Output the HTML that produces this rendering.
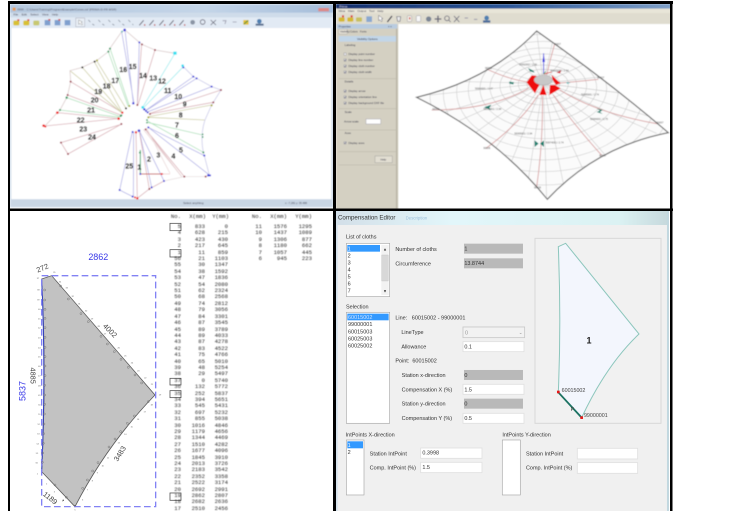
<!DOCTYPE html>
<html><head><meta charset="utf-8"><style>
html,body{margin:0;padding:0;background:#fff;width:741px;height:511px;overflow:hidden}
#s{position:absolute;left:0;top:0;width:741px;height:511px}
text{font-family:"Liberation Sans",sans-serif}
.col{position:absolute;font:5.6px/6.41px "Liberation Mono",monospace;color:#2a2a2a;text-align:right;white-space:pre;filter:blur(.4px)}
</style></head><body>
<svg id="s" width="741" height="511" viewBox="0 0 741 511" xmlns="http://www.w3.org/2000/svg">
<defs>
<filter id="b1" filterUnits="userSpaceOnUse" x="-10" y="-10" width="1200" height="1000"><feGaussianBlur stdDeviation="1.7"/></filter>
<filter id="b2" filterUnits="userSpaceOnUse" x="-10" y="-10" width="1200" height="1000"><feGaussianBlur stdDeviation="1.1"/></filter>
<linearGradient id="t1" x1="0" x2="1" y1="0" y2="0"><stop offset="0" stop-color="#b5c8de"/><stop offset=".6" stop-color="#c4d5e8"/><stop offset="1" stop-color="#a5bdda"/></linearGradient>
<linearGradient id="t2" x1="0" x2="1" y1="0" y2="0"><stop offset="0" stop-color="#16306e"/><stop offset=".5" stop-color="#2a5596"/><stop offset="1" stop-color="#7fa0c8"/></linearGradient>
<linearGradient id="t4" x1="0" x2="1" y1="0" y2="0"><stop offset="0" stop-color="#d3dfe8"/><stop offset=".35" stop-color="#e2f6fa"/><stop offset=".85" stop-color="#dbf2f3"/><stop offset="1" stop-color="#c6d8dc"/></linearGradient>
<clipPath id="mem"><path d="M620 93Q830 240 1015 398Q800 440 652 598Q500 410 260 292Q480 240 620 93Z"/></clipPath>
</defs>
<rect width="741" height="511" fill="#fff"/>

<!-- PANEL 1 -->
<g transform="scale(.3333)" filter="url(#b1)">
<rect x="30" y="12" width="970" height="610" fill="#cfdcea"/>
<rect x="30" y="14" width="970" height="24" fill="url(#t1)"/>
<rect x="38" y="23" width="9" height="9" fill="#e89a50"/>
<text x="52" y="32" font-size="9" fill="#556">RRR - C:\Users\Training\Program\Example\Cones.csf (PRIMA-D-FR-MSR)</text>
<rect x="955" y="24" width="32" height="10" fill="#d88"/>
<text x="40" y="47" font-size="9" fill="#445" word-spacing="8">File Edit Select View Help</text>
<rect x="30" y="52" width="970" height="32" fill="#e2eaf4"/>
<g fill="#d8c030"><rect x="40" y="62" width="18" height="14" rx="3"/><rect x="70" y="62" width="18" height="14" rx="3"/><rect x="100" y="62" width="18" height="14" rx="3" fill="#c8c870"/></g>
<g fill="#d84040"><rect x="52" y="58" width="6" height="5"/><rect x="82" y="58" width="6" height="5"/></g>
<g fill="#7f9fce"><rect x="134" y="60" width="17" height="16"/><rect x="164" y="60" width="17" height="16"/><rect x="194" y="60" width="17" height="16"/></g>
<g fill="#d05050"><rect x="145" y="57" width="6" height="5"/><rect x="175" y="57" width="6" height="5"/></g>
<rect x="227" y="54" width="27" height="26" fill="#e8eef5" stroke="#889"/>
<path d="M236 60l0 13 4-3 5 5 3-2-5-5 4-2z" fill="#fff" stroke="#555"/>
<g stroke="#8a93a0" stroke-width="2.5" fill="none"><path d="M265 60l6 6M277 72l6 4M295 60l6 6M307 72l6 4M325 60l6 6M337 72l6 4M355 60l6 6M367 72l6 4M385 60l6 6M397 72l3 3"/></g>
<g stroke="#667" stroke-width="3" fill="none"><path d="M418 76l13-15M448 76l13-15M478 76l13-15M508 76l13-15M538 76l13-15"/></g>
<g fill="#c04040"><rect x="432" y="73" width="4" height="4"/><rect x="462" y="73" width="4" height="4"/><rect x="492" y="73" width="4" height="4"/><rect x="522" y="73" width="4" height="4"/><rect x="552" y="73" width="4" height="4"/></g>
<circle cx="578" cy="67" r="7" fill="#8a94a4"/><circle cx="608" cy="66" r="7" fill="none" stroke="#667" stroke-width="2.5"/><path d="M632 60l16 15M648 60l-16 15" stroke="#667" stroke-width="2.5"/>
<path d="M668 62h10l-3 10M698 66h12" stroke="#99a" stroke-width="2.5" fill="none"/>
<rect x="730" y="60" width="16" height="14" fill="#e4c030"/><path d="M732 72l12-10" stroke="#3a8a50" stroke-width="3"/>
<circle cx="778" cy="64" r="7" fill="#4f7fb0"/><rect x="767" y="71" width="24" height="6" fill="#5a6f90"/>
<rect x="34" y="84" width="960" height="514" fill="#fff"/>
<rect x="34" y="598" width="960" height="22" fill="#c9d6e4"/>
<text x="580" y="612" font-size="9" fill="#445" text-anchor="middle">Select anything</text>
<text x="888" y="612" font-size="8" fill="#445" text-anchor="middle">x: -7,281 y: 35.488</text>
<g fill="none" stroke-width="2.4">
<g stroke="#b4b4e8"><path d="M397 396L359 570L398 590M401 396L400 590M418 392L455 562M418 392L492 543M445 382L628 525M445 382L613 467M400 310L375 90M402 310L365 95M412 315L418 127M438 332L590 235M436 332L580 230M442 336L635 260"/></g>
<g stroke="#dcb4ba"><path d="M408 397L412 595M418 395L448 567L412 595M448 567L492 543M412 315L425 133M414 315L465 150M448 342L640 307M450 340L663 270M367 372L183 428M365 372L204 462M183 428L204 462M367 338L212 245M362 345L203 285M356 356L172 338M356 356L135 378L130 376M437 388L553 530M436 388L545 530"/></g>
<g stroke="#b0e2bc"><path d="M440 362L610 457M441 367L608 405M388 318L330 145M385 320L325 155M361 350L200 293M358 352L180 330"/></g>
<g stroke="#a0eef0"><path d="M428 322L525 160M430 324L550 200"/></g>
<g stroke="#d0d0a8"><path d="M445 352L615 360M446 350L635 315M378 325L290 182M367 338L283 185M367 340L247 202M367 340L210 212"/></g>
<g stroke="#ecdcdc"><path d="M430 388L545 530M440 385L510 520"/></g>
<path d="M628 525L617 530L553 530L492 543" stroke="#e8e0e0"/>
<path d="M628 525L613 467L610 457Q600 405 615 360L635 315L640 307L663 270L635 260L590 235L580 230L550 200" stroke="#ccccea"/>
<path d="M525 160L465 150L425 133L418 127L375 90L365 95L330 145L325 155L290 182L283 185L247 202L210 212L212 245L203 285L200 293L180 330L172 338L135 378" stroke="#dccccc"/>
<path d="M421 450L421 522" stroke="#50a878" stroke-width="3"/>
<path d="M421 522L490 522" stroke="#cc6060" stroke-width="3"/>
<path d="M490 522L510 522" stroke="#eecccc"/>
</g>
<g>
<g fill="#3636d8"><circle cx="374" cy="90" r="4"/><circle cx="366" cy="95" r="3" fill="#70c0c0"/><circle cx="418" cy="127" r="3"/><circle cx="580" cy="230" r="3"/><circle cx="590" cy="235" r="3"/><circle cx="635" cy="260" r="3"/><circle cx="400" cy="310" r="3.5"/><circle cx="433" cy="328" r="3.5"/><circle cx="438" cy="333" r="3"/><circle cx="443" cy="337" r="3"/><circle cx="398" cy="396" r="3"/><circle cx="417" cy="392" r="4"/><circle cx="445" cy="382" r="3"/><circle cx="421" cy="522" r="3"/><circle cx="455" cy="562" r="3"/><circle cx="492" cy="543" r="3"/><circle cx="359" cy="570" r="3"/><circle cx="398" cy="590" r="3"/><circle cx="625" cy="526" r="3.5"/><circle cx="630" cy="526" r="3"/><circle cx="613" cy="467" r="3"/><circle cx="550" cy="202" r="3"/></g>
<g fill="#ee2020"><circle cx="172" cy="338" r="4"/><circle cx="131" cy="377" r="4"/><circle cx="136" cy="380" r="3"/><circle cx="356" cy="356" r="4"/><circle cx="367" cy="338" r="3.5"/><circle cx="408" cy="397" r="3.5"/><circle cx="412" cy="595" r="3.5"/><circle cx="405" cy="592" r="3"/><circle cx="485" cy="522" r="3"/></g>
<g fill="#a04050"><circle cx="426" cy="133" r="3"/><circle cx="465" cy="150" r="3"/><circle cx="663" cy="270" r="3"/><circle cx="640" cy="307" r="3"/><circle cx="450" cy="342" r="3"/><circle cx="412" cy="315" r="3"/><circle cx="364" cy="372" r="3"/><circle cx="183" cy="428" r="3"/><circle cx="204" cy="462" r="3"/><circle cx="212" cy="245" r="3"/><circle cx="203" cy="285" r="3"/><circle cx="437" cy="388" r="3"/><circle cx="448" cy="567" r="3"/><circle cx="553" cy="530" r="3"/><circle cx="617" cy="530" r="3"/></g>
<g fill="#2a9a60"><circle cx="330" cy="146" r="3"/><circle cx="325" cy="155" r="3"/><circle cx="200" cy="293" r="3.5"/><circle cx="180" cy="330" r="3"/><circle cx="362" cy="348" r="3"/><circle cx="364" cy="346" r="3"/><circle cx="610" cy="457" r="3"/><circle cx="608" cy="403" r="2.5"/><circle cx="608" cy="411" r="2.5"/><circle cx="441" cy="360" r="2.5"/><circle cx="441" cy="368" r="2.5"/><circle cx="420" cy="458" r="3"/></g>
<g fill="#111"><circle cx="247" cy="202" r="3"/><circle cx="378" cy="325" r="3"/><circle cx="284" cy="185" r="3"/></g>
<g fill="#a8a820"><circle cx="291" cy="181" r="3"/><circle cx="635" cy="316" r="3"/><circle cx="445" cy="352" r="3"/><circle cx="388" cy="318" r="3"/></g>
<g fill="#30e0f0"><rect x="520" y="155" width="10" height="9"/><circle cx="548" cy="197" r="4"/><circle cx="428" cy="322" r="4"/></g>
</g>
<g font-size="21" font-weight="bold" fill="#1a1a1a" text-anchor="middle" stroke="#1a1a1a" stroke-width=".5">
<text x="388" y="505">25</text><text x="418" y="508">1</text><text x="447" y="485">2</text><text x="475" y="473">3</text><text x="520" y="475">4</text><text x="543" y="458">5</text><text x="531" y="414">6</text><text x="531" y="382">7</text><text x="542" y="352">8</text><text x="554" y="319">9</text><text x="535" y="297">10</text><text x="503" y="279">11</text><text x="486" y="251">12</text><text x="460" y="241">13</text><text x="429" y="234">14</text><text x="398" y="207">15</text><text x="370" y="216">16</text><text x="346" y="249">17</text><text x="320" y="265">18</text><text x="295" y="282">19</text><text x="284" y="308">20</text><text x="273" y="337">21</text><text x="242" y="367">22</text><text x="250" y="394">23</text><text x="276" y="418">24</text>
</g>
</g>

<!-- PANEL 2 -->
<g transform="translate(330,0) scale(.3333)" filter="url(#b1)">
<rect x="18" y="12" width="1005" height="615" fill="#d6d2c4"/>
<rect x="18" y="12" width="1005" height="14" fill="url(#t2)"/>
<text x="28" y="22" font-size="9" fill="#dde">Prima</text>
<rect x="18" y="26" width="1005" height="14" fill="#e8e5d8"/>
<text x="26" y="36" font-size="9" fill="#445" word-spacing="6">Mina Main Output Tool Help</text>
<rect x="18" y="40" width="1005" height="32" fill="#dfdccf"/>
<g fill="#d4b830"><rect x="26" y="52" width="18" height="13" rx="3"/><rect x="52" y="52" width="18" height="13" rx="3"/><rect x="78" y="52" width="18" height="13" rx="3" fill="#c8c060"/></g>
<g fill="#d83030"><rect x="36" y="46" width="6" height="6"/><rect x="62" y="46" width="6" height="6"/></g>
<rect x="109" y="49" width="17" height="17" fill="#8aa8d0"/>
<path d="M146 46v16l4-3 4 6 3-2-3-6 5-1z" fill="#fff" stroke="#556" stroke-width="1.5"/>
<path d="M172 66l14-18" stroke="#334" stroke-width="3.5"/>
<path d="M200 50h12l-2 14h-7z" fill="#eee" stroke="#667" stroke-width="2"/>
<rect x="232" y="47" width="13" height="18" rx="3" fill="#f4f0e8" stroke="#778"/><rect x="237" y="52" width="4" height="6" fill="#d04040"/>
<rect x="259" y="47" width="13" height="18" rx="3" fill="#f8f8f8" stroke="#778"/>
<circle cx="296" cy="57" r="8" fill="#7a8494"/><path d="M324 47v20M314 57h20" stroke="#667" stroke-width="4"/>
<circle cx="351" cy="55" r="7" fill="none" stroke="#667" stroke-width="2.5"/><path d="M356 60l6 6" stroke="#667" stroke-width="2.5"/>
<path d="M372 48l16 18M388 48l-16 18" stroke="#667" stroke-width="2.5"/>
<path d="M404 54h10M432 58h10" stroke="#99a" stroke-width="3"/>
<circle cx="470" cy="54" r="7" fill="#4f7fb0"/><rect x="459" y="61" width="22" height="7" fill="#4a6a9a"/>

<rect x="20" y="72" width="182" height="555" fill="#d4d0c2"/>
<rect x="20" y="72" width="182" height="14" fill="#b9cce0"/>
<rect x="198" y="86" width="4" height="541" fill="#b8b4a6"/>
<text x="26" y="82" font-size="8" fill="#334">Properties</text>
<text x="174" y="82" font-size="8" fill="#334">&#215; &#215;</text>
<rect x="26" y="88" width="26" height="14" fill="#e8e4d8" stroke="#999"/>
<text x="30" y="98" font-size="8" fill="#334">Visibility</text><text x="60" y="98" font-size="8" fill="#334">Colors</text><text x="90" y="98" font-size="8" fill="#334">Fonts</text>
<rect x="26" y="108" width="172" height="17" fill="#c2d6e8"/>
<text x="112" y="120" font-size="8.5" fill="#334" text-anchor="middle">Visibility Options</text>
<g font-size="8.5" fill="#334">
<text x="44" y="138">Labeling</text>
<text x="55" y="165">Display point number</text><text x="55" y="183">Display line number</text><text x="55" y="201">Display cloth number</text><text x="55" y="219">Display cloth width</text>
<text x="44" y="248">Details</text>
<text x="55" y="276">Display arrow</text><text x="55" y="294">Display orientation line</text><text x="55" y="312">Display background DXF file</text>
<text x="44" y="339">Scale</text><text x="42" y="368">Arrow scale</text>
<text x="44" y="402">Axes</text><text x="55" y="432">Display axes</text>
</g>
<g fill="#eee" stroke="#778"><rect x="42" y="159" width="7" height="7"/><rect x="42" y="177" width="7" height="7"/><rect x="42" y="195" width="7" height="7"/><rect x="42" y="213" width="7" height="7"/><rect x="42" y="270" width="7" height="7"/><rect x="42" y="288" width="7" height="7"/><rect x="42" y="306" width="7" height="7"/><rect x="42" y="425" width="7" height="7"/></g>
<g stroke="#556" stroke-width="1.6" fill="none"><path d="M43 180l2 3 3-5M43 198l2 3 3-5M43 216l2 3 3-5M43 273l2 3 3-5M43 291l2 3 3-5M43 309l2 3 3-5M43 428l2 3 3-5"/></g>
<path d="M26 236H198M26 326H198M26 390H198M26 455H198M26 495H198" stroke="#b8b4a6" stroke-width="1.5"/>
<rect x="108" y="357" width="44" height="15" fill="#fff" stroke="#889"/>
<rect x="135" y="468" width="52" height="20" fill="#e2ded2" stroke="#888"/>
<text x="160" y="482" font-size="8.5" fill="#334" text-anchor="middle">Help</text>

<rect x="205" y="72" width="818" height="555" fill="#fff"/>
<path d="M620 93Q830 240 1015 398Q800 440 652 598Q500 410 260 292Q480 240 620 93Z" fill="#fbfbfb"/>
<g clip-path="url(#mem)" fill="none" stroke="#c6c6c6" stroke-width="1.6">
<ellipse cx="640" cy="250" rx="50" ry="28"/><ellipse cx="640" cy="252" rx="75" ry="44"/><ellipse cx="640" cy="255" rx="100" ry="60"/><ellipse cx="640" cy="258" rx="130" ry="80"/><ellipse cx="640" cy="262" rx="160" ry="100"/><ellipse cx="640" cy="266" rx="190" ry="122"/><ellipse cx="640" cy="270" rx="225" ry="146"/><ellipse cx="640" cy="275" rx="260" ry="172"/><ellipse cx="640" cy="280" rx="300" ry="200"/><ellipse cx="640" cy="285" rx="340" ry="230"/><ellipse cx="640" cy="290" rx="385" ry="265"/>
<path d="M640 250L620 93M640 250L580 125M640 250L540 170M640 250L470 200M640 250L400 245M640 250L300 285M640 250L330 340M640 250L370 370M640 250L420 410M640 250L470 480M640 250L530 520M640 250L590 570M640 250L650 600M640 250L700 550M640 250L760 510M640 250L830 470M640 250L900 440M640 250L980 400M640 250L960 350M640 250L880 280M640 250L820 230M640 250L770 190M640 250L720 150M640 250L670 115"/>
</g>
<g fill="none" stroke="#d8a0a0" stroke-width="2.6">
<path d="M674 132Q660 180 650 225"/><path d="M470 207Q540 240 600 247"/><path d="M805 238Q740 245 680 250"/><path d="M305 330Q480 330 595 265"/><path d="M985 372Q800 340 690 270"/><path d="M468 445Q570 370 625 285"/><path d="M815 466Q720 360 670 285"/><path d="M620 562Q640 420 637 288"/>
</g>
<path d="M620 93Q830 240 1015 398Q800 440 652 598Q500 410 260 292Q480 240 620 93Z" fill="none" stroke="#666" stroke-width="3.4"/>
<g fill="#ee1010">
<path d="M605 226l15 2 8 27-13 25-25-33z"/><path d="M640 255l10 30h-22z"/><path d="M660 255l15 0 17 10-34 20z"/><path d="M665 225l27 25-14 5-10-15z"/>
</g>
<ellipse cx="640" cy="240" rx="28" ry="15" fill="#c8c8c8" stroke="#999"/>
<path d="M641 160v62" stroke="#3a3ae0" stroke-width="2.5"/><path d="M641 162l-4 24h8z" fill="#3a3ae0"/>
<path d="M641 222l24-6" stroke="#d03030" stroke-width="2"/><path d="M641 222l6-8" stroke="#30a050" stroke-width="2"/>
<g fill="#1f8070">
<path d="M594 204l16 8 4 6-14-4z"/><path d="M538 245l14 2-2 6-12-2z"/><path d="M462 322l22-8-6 10 6 6z"/><path d="M800 326l18 4-8 6 8 6-18-6 10-4z"/><path d="M614 421l12 10-12 10zM642 421l-12 10 12 10z"/><path d="M708 246l14 2-10 4z" fill="#70c0c0"/>
</g>
<path d="M680 218l14-8-4 10z" fill="#d02030"/>
<g font-size="7.5" fill="#555">
<text x="567" y="196">50092002 / 2.99</text><text x="662" y="215">60015002 / 2.94</text><text x="435" y="268">50064001 / 3.47</text><text x="460" y="330">50055001 / 2.94</text><text x="753" y="286">50085001 / 2.74</text><text x="780" y="360">50084001 / 2.75</text><text x="553" y="403">50065001 / 2.94</text><text x="647" y="430">50074001 / 2.74</text>
<text x="672" y="135">90007</text><text x="465" y="207">90002</text><text x="802" y="236">90007</text><text x="307" y="330">90005</text><text x="980" y="370">90007</text><text x="460" y="447">90006</text><text x="808" y="470">90007</text><text x="612" y="566">90008</text>
</g>
</g>

<!-- PANEL 3 -->
<g transform="translate(0,205) scale(.3333)" filter="url(#b2)">
<rect x="30" y="18" width="975" height="900" fill="#fff"/>
<path d="M125 222L155 212L465 570Q320 720 225 905L125 800Q140 500 125 222Z" fill="#c2c2c2" stroke="#5a5a5a" stroke-width="2.4"/>
<path d="M125 222Q138 500 125 800" fill="none" stroke="#3040c0" stroke-width="3"/>
<rect x="125" y="212" width="342" height="693" fill="none" stroke="#8282f4" stroke-width="4" stroke-dasharray="20 10"/>
<g font-size="27" fill="#3a3ae8">
<text x="295" y="165" text-anchor="middle">2862</text>
<text transform="translate(76,558) rotate(-90)" text-anchor="middle">5837</text>
</g>
<g font-size="22" fill="#444" text-anchor="middle">
<text transform="translate(130,196) rotate(-22)">272</text>
<text transform="translate(325,382) rotate(45)">4002</text>
<text transform="translate(91,512) rotate(90)">4885</text>
<text transform="translate(366,750) rotate(-58)">3483</text>
<text transform="translate(146,885) rotate(38)">1189</text>
</g>
<g fill="none" stroke="#707070" stroke-width="1.4">
<circle cx="134" cy="255" r="3"/><circle cx="134" cy="285" r="3"/><circle cx="135" cy="313" r="3"/><circle cx="135" cy="340" r="3"/><circle cx="135" cy="368" r="3"/><circle cx="135" cy="397" r="3"/><circle cx="135" cy="427" r="3"/><circle cx="135" cy="455" r="3"/><circle cx="135" cy="483" r="3"/><circle cx="135" cy="512" r="3"/><circle cx="134" cy="541" r="3"/><circle cx="134" cy="570" r="3"/><circle cx="134" cy="598" r="3"/><circle cx="133" cy="627" r="3"/><circle cx="132" cy="657" r="3"/><circle cx="131" cy="686" r="3"/><circle cx="130" cy="715" r="3"/><circle cx="128" cy="744" r="3"/><circle cx="127" cy="772" r="3"/>
<circle cx="182" cy="243" r="3"/><circle cx="205" cy="282" r="3"/><circle cx="243" cy="326" r="3"/><circle cx="265" cy="350" r="3"/><circle cx="303" cy="394" r="3"/><circle cx="322" cy="417" r="3"/><circle cx="343" cy="440" r="3"/><circle cx="363" cy="463" r="3"/><circle cx="385" cy="487" r="3"/><circle cx="405" cy="510" r="3"/><circle cx="425" cy="534" r="3"/>
<circle cx="445" cy="590" r="3"/><circle cx="403" cy="633" r="3"/><circle cx="382" cy="655" r="3"/><circle cx="362" cy="680" r="3"/><circle cx="345" cy="702" r="3"/><circle cx="327" cy="726" r="3"/><circle cx="294" cy="773" r="3"/><circle cx="278" cy="798" r="3"/><circle cx="262" cy="825" r="3"/><circle cx="248" cy="850" r="3"/><circle cx="199" cy="877" r="3"/><circle cx="165" cy="840" r="3"/>
</g>
<g font-size="6.5" fill="#666" text-anchor="middle">
<text x="114" y="222">37</text><text x="163" y="204">35</text><text x="115" y="256">38</text><text x="115" y="286">39</text><text x="118" y="315">40</text><text x="118" y="343">41</text><text x="118" y="371">42</text><text x="118" y="400">43</text><text x="118" y="430">44</text><text x="118" y="458">45</text><text x="118" y="486">46</text><text x="118" y="515">47</text><text x="118" y="544">48</text><text x="118" y="573">49</text><text x="118" y="601">50</text><text x="118" y="630">51</text><text x="116" y="660">52</text><text x="115" y="689">53</text><text x="113" y="718">54</text><text x="111" y="747">55</text><text x="110" y="775">56</text><text x="112" y="808">1</text>
<text x="180" y="232">34</text><text x="200" y="250">33</text><text x="218" y="276">32</text><text x="238" y="298">31</text><text x="258" y="320">30</text><text x="276" y="343">29</text><text x="296" y="366">28</text><text x="315" y="388">27</text><text x="356" y="430">26</text><text x="376" y="454">25</text><text x="396" y="475">24</text><text x="415" y="500">23</text><text x="436" y="520">22</text><text x="456" y="540">21</text><text x="480" y="572">19</text><text x="455" y="602">18</text><text x="434" y="622">17</text><text x="414" y="645">16</text><text x="395" y="668">15</text><text x="376" y="690">14</text><text x="356" y="716">13</text><text x="324" y="760">11</text><text x="308" y="784">10</text><text x="292" y="806">9</text><text x="277" y="830">8</text><text x="262" y="857">7</text><text x="248" y="886">6</text><text x="225" y="916">5</text><text x="188" y="890">4</text><text x="163" y="862">3</text><text x="140" y="838">2</text>
</g>
<g fill="#666"><rect x="223" y="900" width="4" height="4"/><rect x="188" y="884" width="4" height="4"/></g>
<g transform="translate(480,0)" fill="none" stroke="#555" stroke-width="2.4">
<rect x="30" y="55" width="33" height="22"/><rect x="30" y="134" width="33" height="22"/><rect x="30" y="520" width="33" height="20"/><rect x="30" y="557" width="33" height="21"/><rect x="30" y="864" width="33" height="22"/>
</g>
</g>

<!-- PANEL 4 -->
<g transform="translate(333,205) scale(.3333)" filter="url(#b2)">
<rect x="8" y="18" width="1000" height="900" fill="#f0f0f0"/>
<rect x="8" y="18" width="1000" height="42" fill="url(#t4)"/>
<rect x="8" y="18" width="6" height="900" fill="#d4e2ec"/>
<rect x="1002" y="18" width="6" height="900" fill="#c2d8e0"/>
<text x="15" y="43" font-size="18.5" fill="#333">Compensation Editor</text>
<text x="218" y="43" font-size="13" fill="#9cc0dc">Description</text>
<g fill="#fff" stroke="#aaa" stroke-width="2">
<rect x="40" y="115" width="130" height="160"/><rect x="40" y="322" width="130" height="333"/><rect x="40" y="705" width="53" height="165"/><rect x="508" y="705" width="54" height="165"/>
</g>
<rect x="43" y="120" width="98" height="20" fill="#3399ff"/><rect x="43" y="326" width="124" height="20" fill="#3399ff"/><rect x="43" y="709" width="47" height="21" fill="#3399ff"/>
<rect x="145" y="120" width="22" height="150" fill="#f2f2f2"/><rect x="146" y="150" width="20" height="78" fill="#d8d8d8" stroke="#bbb"/>
<text x="156" y="136" font-size="14" text-anchor="middle" fill="#222">&#9652;</text><text x="156" y="262" font-size="14" text-anchor="middle" fill="#222">&#9662;</text>
<g fill="#b9b9b9"><rect x="393" y="116" width="177" height="30"/><rect x="393" y="160" width="177" height="30"/><rect x="393" y="495" width="177" height="30"/><rect x="393" y="581" width="177" height="30"/></g>
<g fill="#fff" stroke="#e0e0e0" stroke-width="2.5">
<rect x="390" y="410" width="183" height="30"/><rect x="390" y="538" width="183" height="30"/><rect x="390" y="625" width="183" height="30"/><rect x="263" y="729" width="184" height="31"/><rect x="263" y="772" width="184" height="31"/><rect x="733" y="730" width="181" height="32"/><rect x="733" y="773" width="181" height="32"/>
</g>
<rect x="390" y="366" width="185" height="32" fill="#f2f2f2" stroke="#c8c8c8" stroke-width="2.5"/>
<text x="563" y="387" font-size="14" text-anchor="middle" fill="#888">&#8964;</text>
<g font-size="16.5" fill="#333">
<text x="39" y="100">List of cloths</text>
<text x="44" y="137" fill="#fff">1</text><text x="44" y="158">2</text><text x="44" y="179">3</text><text x="44" y="200">4</text><text x="44" y="221">5</text><text x="44" y="242">6</text><text x="44" y="263">7</text>
<text x="187" y="138">Number of cloths</text><text x="187" y="181">Circumference</text>
<text x="394" y="137">1</text><text x="394" y="180">13.8744</text>
<text x="39" y="311">Selection</text>
<text x="45" y="342" fill="#cfe4ff">60015002</text><text x="45" y="363">99000001</text><text x="45" y="385">60015003</text><text x="45" y="406">60025003</text><text x="45" y="428">60025002</text>
<text x="187" y="344" xml:space="preserve">Line:   60015002 - 99000001</text>
<text x="205" y="387">LineType</text><text x="396" y="388" fill="#999">0</text>
<text x="205" y="430">Allowance</text><text x="394" y="430">0.1</text>
<text x="187" y="473" xml:space="preserve">Point:  60015002</text>
<text x="206" y="516">Station x-direction</text><text x="394" y="516">0</text>
<text x="206" y="559">Compensation X (%)</text><text x="394" y="559">1.5</text>
<text x="206" y="602">Station y-direction</text><text x="394" y="602">0</text>
<text x="206" y="645">Compensation Y (%)</text><text x="394" y="645">0.5</text>
<text x="38" y="694">IntPoints  X-direction</text>
<text x="44" y="726" fill="#fff">1</text><text x="44" y="747">2</text>
<text x="110" y="751">Station IntPoint</text><text x="110" y="794">Comp. IntPoint (%)</text>
<text x="268" y="749">0.3998</text><text x="268" y="792">1.5</text>
<text x="508" y="694">IntPoints  Y-direction</text>
<text x="579" y="751">Station IntPoint</text><text x="579" y="794">Comp. IntPoint (%)</text>
</g>
<rect x="606" y="100" width="378" height="555" fill="#f1f1f1" stroke="#d8d8d8" stroke-width="3"/>
<path d="M676 125L698 115L918 387Q820 480 746 638L676 562Q685 350 676 125Z" fill="#f3f6fd" stroke="#8cc6bc" stroke-width="3"/>
<path d="M676 562L746 638" stroke="#1a7262" stroke-width="5.5"/>
<rect x="672" y="557" width="8" height="8" fill="#e81818"/><rect x="742" y="634" width="8" height="8" fill="#e81818"/>
<g font-size="16" fill="#444"><text x="686" y="561">60015002</text><text x="753" y="636">99000001</text><text x="713" y="618">P</text></g>
<text x="768" y="415" font-size="27" font-weight="bold" fill="#222" text-anchor="middle">1</text>
</g>

<!-- black frame -->
<g fill="#000">
<rect x="8" y="1" width="665" height="3"/>
<rect x="8" y="1" width="2" height="510"/>
<rect x="333" y="1" width="3" height="510"/>
<rect x="670" y="1" width="2.5" height="510"/>
<rect x="8" y="208.5" width="665" height="2.5"/>
</g>
</svg>

<div class="col" style="left:165px;top:213.6px;width:16px">No.</div>
<div class="col" style="left:185px;top:213.6px;width:21px">X(mm)</div>
<div class="col" style="left:208px;top:213.6px;width:21px">Y(mm)</div>
<div class="col" style="left:165px;top:224px;width:16px">5
4
3
2
1
56
55
54
53
52
51
50
49
48
47
46
45
44
43
42
41
40
39
38
37
36
35
34
33
32
31
30
29
28
27
26
25
24
23
22
21
20
19
18
17</div>
<div class="col" style="left:185px;top:224px;width:20px">833
628
423
217
11
21
30
38
47
54
62
68
74
79
84
87
89
89
87
83
75
65
48
29
0
132
252
394
545
697
855
1016
1179
1344
1510
1677
1845
2013
2183
2352
2522
2692
2862
2682
2510</div>
<div class="col" style="left:208px;top:224px;width:20px">0
215
430
645
859
1103
1347
1592
1836
2080
2324
2568
2812
3056
3301
3545
3789
4033
4278
4522
4766
5010
5254
5497
5740
5772
5837
5651
5431
5232
5038
4846
4656
4469
4282
4096
3910
3726
3542
3358
3174
2991
2807
2636
2456</div>
<div class="col" style="left:246px;top:213.6px;width:16px">No.</div>
<div class="col" style="left:266px;top:213.6px;width:21px">X(mm)</div>
<div class="col" style="left:291px;top:213.6px;width:21px">Y(mm)</div>
<div class="col" style="left:246px;top:224px;width:16px">11
10
9
8
7
6</div>
<div class="col" style="left:266px;top:224px;width:21px">1576
1437
1306
1180
1057
945</div>
<div class="col" style="left:291px;top:224px;width:21px">1295
1089
877
662
445
223</div>
</body></html>
